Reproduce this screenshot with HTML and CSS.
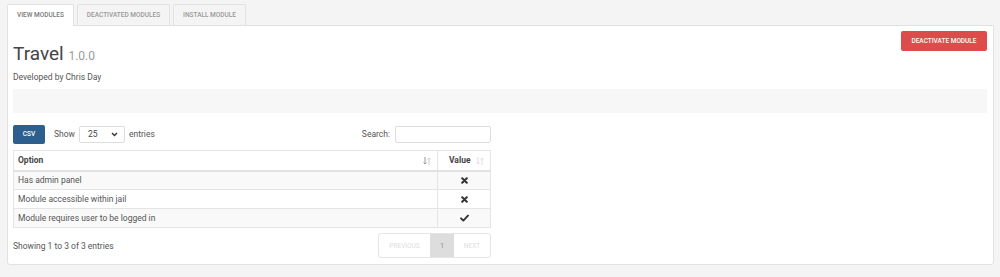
FILE: index.html
```html
<!DOCTYPE html>
<html lang="en">
<head>
    <meta charset="UTF-8">
    <title>Modules</title>
    <link rel="stylesheet" href="styles.css">
</head>
<body>
    <!-- tabs -->
    <ul class="tabs">
        <li class="tab active">View Modules</li>
        <li class="tab">Deactivated Modules</li>
        <li class="tab">Install Module</li>
    </ul>

    <div class="panel">
        <div class="module-head">
            <div>
                <h1 class="module-title">Travel <small>1.0.0</small></h1>
                <p class="module-author">Developed by Chris Day</p>
            </div>
            <button class="btn-danger">Deactivate Module</button>
        </div>

        <div class="well"></div>

        <div class="dt-wrap">
            <div class="dt-top">
                <div class="dt-left">
                    <button class="btn-csv">CSV</button>
                    <label class="dt-length">Show
                        <span class="select">25
                            <svg width="7" height="5" viewBox="0 0 7 5"><path d="M1 1l2.5 2.5L6 1" fill="none" stroke="#333" stroke-width="1.4"/></svg>
                        </span>
                        entries</label>
                </div>
                <label class="dt-search">Search: <span class="input"></span></label>
            </div>

            <table class="dt">
                <thead>
                    <tr>
                        <th>Option
                            <svg class="sort" width="8" height="8" viewBox="0 0 8 8"><path d="M2 0v7M0.5 5.5L2 7l1.5-1.5" fill="none" stroke="#999" stroke-width="1"/><path d="M6 8V1M4.5 2.5L6 1l1.5 1.5" fill="none" stroke="#ccc" stroke-width="1"/></svg>
                        </th>
                        <th class="col-value">Value
                            <svg class="sort" width="8" height="8" viewBox="0 0 8 8"><path d="M2 0v7M0.5 5.5L2 7l1.5-1.5" fill="none" stroke="#ddd" stroke-width="1"/><path d="M6 8V1M4.5 2.5L6 1l1.5 1.5" fill="none" stroke="#ddd" stroke-width="1"/></svg>
                        </th>
                    </tr>
                </thead>
                <tbody>
                    <tr class="odd">
                        <td>Has admin panel</td>
                        <td class="col-value"><svg width="7" height="7" viewBox="0 0 7 7"><path d="M1.2 1.2l4.6 4.6M5.8 1.2L1.2 5.8" stroke="#333" stroke-width="2" stroke-linecap="round"/></svg></td>
                    </tr>
                    <tr>
                        <td>Module accessible within jail</td>
                        <td class="col-value"><svg width="7" height="7" viewBox="0 0 7 7"><path d="M1.2 1.2l4.6 4.6M5.8 1.2L1.2 5.8" stroke="#333" stroke-width="2" stroke-linecap="round"/></svg></td>
                    </tr>
                    <tr class="odd">
                        <td>Module requires user to be logged in</td>
                        <td class="col-value"><svg width="9" height="8" viewBox="0 0 9 8"><path d="M1 4.3l2.3 2.3L8 1.6" fill="none" stroke="#333" stroke-width="1.9" stroke-linecap="round" stroke-linejoin="round"/></svg></td>
                    </tr>
                </tbody>
            </table>

            <div class="dt-bottom">
                <span class="dt-info">Showing 1 to 3 of 3 entries</span>
                <div class="pager">
                    <span class="page disabled">Previous</span>
                    <span class="page current">1</span>
                    <span class="page disabled">Next</span>
                </div>
            </div>
        </div>
    </div>
</body>
</html>
```

FILE: styles.css
```css
* {
    margin: 0;
    padding: 0;
    box-sizing: border-box;
}

body {
    font-family: Roboto, "Liberation Sans", sans-serif;
    font-size: 8.5px;
    color: #555;
    background: #f4f4f4;
    padding: 4px 6px 0 7px;
}

/* tabs */
.tabs {
    list-style: none;
    display: flex;
    gap: 3px;
    height: 21px;
}

.tab {
    padding: 0 9px;
    line-height: 20px;
    font-size: 6.5px;
    font-weight: 500;
    text-transform: uppercase;
    color: #999;
    background: #f4f4f4;
    border: 1px solid #e2e2e2;
    border-bottom: none;
    border-radius: 2px 2px 0 0;
}

.tab.active {
    color: #777;
    background: #fff;
    height: 22px;
    position: relative;
    z-index: 1;
}

/* panel */
.panel {
    background: #fff;
    border: 1px solid #e2e2e2;
    border-radius: 0 0 3px 3px;
    padding: 5px 6px 0 5px;
    height: 240px;
}

.module-head {
    display: flex;
    justify-content: space-between;
    align-items: flex-start;
}

.module-title {
    font-size: 19px;
    font-weight: 400;
    color: #444;
    line-height: 22px;
    margin-top: 12px;
}

.module-title small {
    font-size: 12px;
    color: #999;
}

.module-author {
    margin-top: 5px;
    color: #555;
}

.btn-danger {
    font-family: inherit;
    background: #dd4b4b;
    color: #fff;
    border: none;
    border-radius: 2px;
    width: 86px;
    height: 20px;
    font-size: 6.5px;
    font-weight: 500;
    text-transform: uppercase;
}

.well {
    margin-top: 7px;
    height: 24px;
    background: #f7f7f7;
}

/* data table */
.dt-wrap {
    width: 478px;
    margin-top: 12px;
}

.dt-top {
    display: flex;
    justify-content: space-between;
    align-items: center;
    height: 18px;
}

.dt-left {
    display: flex;
    align-items: center;
    gap: 9px;
}

.btn-csv {
    font-family: inherit;
    width: 32px;
    height: 19px;
    background: #2d5f8e;
    color: #fff;
    border: none;
    border-radius: 2px;
    font-size: 6.5px;
    font-weight: 500;
}

.dt-length {
    display: flex;
    align-items: center;
    gap: 4px;
}

.select {
    display: flex;
    align-items: center;
    justify-content: space-between;
    width: 46px;
    height: 17px;
    padding: 0 6px 0 8px;
    border: 1px solid #ddd;
    border-radius: 2px;
    background: #fff;
    color: #444;
}

.dt-search {
    display: flex;
    align-items: center;
    gap: 5px;
}

.input {
    width: 96px;
    height: 17px;
    border: 1px solid #ddd;
    border-radius: 2px;
}

.dt {
    width: 100%;
    margin-top: 7px;
    border-collapse: collapse;
    border: 1px solid #e2e2e2;
}

.dt th,
.dt td {
    height: 19px;
    padding: 0 4px;
    text-align: left;
    border: 1px solid #e5e5e5;
}

.dt th {
    height: 20px;
    font-weight: 700;
    color: #444;
    border-bottom: 2px solid #e2e2e2;
    position: relative;
}

.sort {
    position: absolute;
    right: 6px;
    top: 6px;
}

.dt .col-value {
    width: 53px;
    text-align: center;
}

.dt th.col-value {
    text-align: left;
    padding-left: 11px;
}

.dt td svg {
    display: block;
    margin: 0 auto;
}

.dt tr.odd td {
    background: #f9f9f9;
}

.dt-bottom {
    display: flex;
    justify-content: space-between;
    align-items: center;
    margin-top: 5px;
}

.pager {
    display: flex;
    height: 25px;
    border: 1px solid #e5e5e5;
    border-radius: 3px;
    overflow: hidden;
}

.page {
    display: flex;
    align-items: center;
    justify-content: center;
    font-size: 6.5px;
    text-transform: uppercase;
    color: #ddd;
}

.page.disabled:first-child { width: 51px; }
.page.disabled:last-child { width: 36px; }

.page.current {
    width: 24px;
    background: #ddd;
    color: #888;
}
```
